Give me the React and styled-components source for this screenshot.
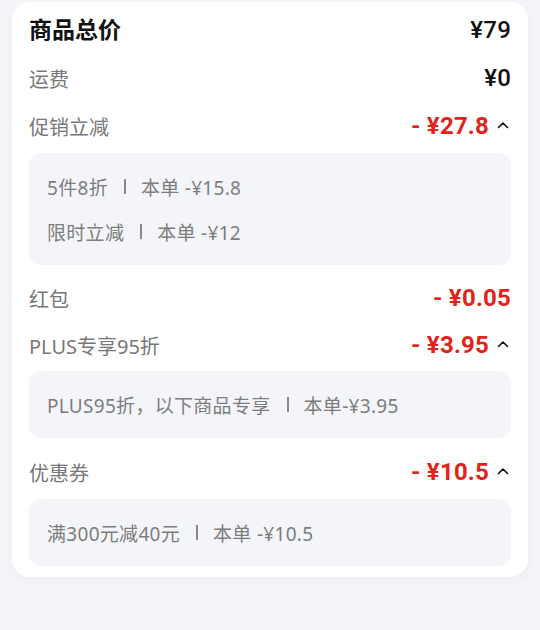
import React from 'react'
import styled, { createGlobalStyle } from 'styled-components'

const GlobalStyle = createGlobalStyle`
  html, body {
    margin: 0;
    padding: 0;
    background: #f4f5f9;
    font-family: "Noto Sans CJK SC", "Noto Sans", Roboto, sans-serif;
  }
`

const rows = [
  { label: '运费', value: '¥0' },
  {
    label: '促销立减',
    value: '- ¥27.8',
    red: true,
    open: true,
    details: [
      ['5件8折', '本单 -¥15.8'],
      ['限时立减', '本单 -¥12'],
    ],
  },
  { label: '红包', value: '- ¥0.05', red: true, gap: 9 },
  {
    label: 'PLUS专享95折',
    value: '- ¥3.95',
    red: true,
    open: true,
    h: 46,
    details: [['PLUS95折，以下商品专享', '本单-¥3.95']],
  },
  {
    label: '优惠券',
    value: '- ¥10.5',
    red: true,
    open: true,
    gap: 10,
    details: [['满300元减40元', '本单 -¥10.5']],
  },
]

function Chevron() {
  return (
    <svg width="12" height="8" viewBox="0 0 12 8" fill="none">
      <polyline points="1.5,6.5 6,2 10.5,6.5" stroke="#111" strokeWidth="1.6" strokeLinecap="round" strokeLinejoin="round" />
    </svg>
  )
}

function App() {
  return (
    <Page>
      <GlobalStyle />
      <Card>
        <Row>
          <Title>商品总价</Title>
          <Amount>¥79</Amount>
        </Row>
        {rows.map((r) => (
          <React.Fragment key={r.label}>
            <Row gap={r.gap} h={r.h}>
              <Label>{r.label}</Label>
              <Right>
                <Amount red={r.red}>{r.value}</Amount>
                {r.open && <Chevron />}
              </Right>
            </Row>
            {r.details && (
              <Detail>
                {r.details.map(([name, amount]) => (
                  <DetailLine key={name}>
                    {name}
                    <Sep />
                    {amount}
                  </DetailLine>
                ))}
              </Detail>
            )}
          </React.Fragment>
        ))}
      </Card>
    </Page>
  )
}

export default App

const Page = styled.div`
  width: 540px;
  height: 630px;
  padding: 2px 12px 0;
  box-sizing: border-box;
`

const Card = styled.div`
  background: #fff;
  border-radius: 18px;
  padding: 4px 17px 11px;
  box-shadow: 0 4px 10px rgba(30, 40, 80, 0.04);
`

const Row = styled.div`
  height: ${(p) => p.h || 48}px;
  margin-top: ${(p) => p.gap || 0}px;
  display: flex;
  align-items: center;
  justify-content: space-between;
`

const Title = styled.div`
  font-size: 23px;
  font-weight: 700;
  color: #111;
  margin-top: -4px;
`

const Label = styled.div`
  font-size: 20px;
  color: #777;
  font-family: "Noto Sans", "Noto Sans CJK SC", sans-serif;
`

const Right = styled.div`
  display: flex;
  align-items: center;
  gap: 8px;
  svg {
    margin-right: 2px;
    margin-top: -3px;
  }
`

const Amount = styled.div`
  font-family: Roboto, "Noto Sans CJK SC", sans-serif;
  font-size: 24px;
  font-weight: ${(p) => (p.red ? 700 : 500)};
  color: ${(p) => (p.red ? '#e2231a' : '#111')};
  letter-spacing: 0.2px;
`

const Detail = styled.div`
  background: #f4f5f9;
  border-radius: 12px;
  padding: 11px 18px;
  margin-top: 3px;
`

const DetailLine = styled.div`
  height: 45px;
  display: flex;
  align-items: center;
  font-size: 19px;
  color: #7d7d7d;
  letter-spacing: 0.3px;
  font-family: "Noto Sans", "Noto Sans CJK SC", sans-serif;
`

const Sep = styled.span`
  display: inline-block;
  width: 2px;
  height: 15px;
  background: #8a8a8a;
  margin: 0 15px 0 16px;
`
